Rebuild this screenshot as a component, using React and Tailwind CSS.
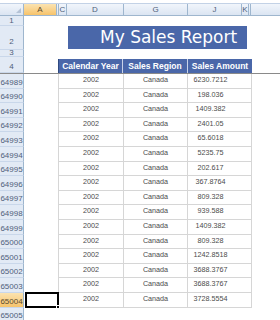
const amounts = [
  "6230.7212",
  "198.036",
  "1409.382",
  "2401.05",
  "65.6018",
  "5235.75",
  "202.617",
  "367.8764",
  "809.328",
  "939.588",
  "1409.382",
  "809.328",
  "1242.8518",
  "3688.3767",
  "3688.3767",
  "3728.5554",
];

const rows = amounts.map((amount, i) => ({
  n: 64989 + i,
  year: "2002",
  region: "Canada",
  amount,
}));

function ColHead({ label, w, active }) {
  return (
    <div
      className={`${w} flex items-center justify-center border-r border-[#9eb6ce] text-[8px] leading-none ${
        active
          ? "bg-linear-to-b from-[#fbe3b0] to-[#f6c36a] text-[#5a4a2a]"
          : "text-[#4f607a]"
      }`}
    >
      {label}
    </div>
  );
}

function RowLabel({ n, h, active, align = "items-end pb-[1px]" }) {
  return (
    <div
      className={`${h} ${align} w-[24px] shrink-0 flex justify-center border-r border-b border-r-[#9eb6ce] border-b-[#c9d7ea] text-[8px] leading-none ${
        active
          ? "bg-linear-to-b from-[#fbe3b0] to-[#f6c36a] text-[#5a4a2a]"
          : "bg-[#e2eaf5] text-[#4f607a]"
      }`}
    >
      {n}
    </div>
  );
}

export default function App() {
  return (
    <div className="w-[280px] h-[320px] overflow-hidden bg-white font-['Liberation_Sans',Arial,sans-serif]">
      <div className="h-[4px] bg-white border-b border-[#c3d2e6]" />

      {/* column headers */}
      <div className="flex h-[12px] bg-linear-to-b from-[#f1f5fb] to-[#dbe5f2] border-b border-[#9eb6ce]">
        <div className="w-[24px] relative border-r border-[#9eb6ce]">
          <div className="absolute right-[2px] bottom-[2px] w-0 h-0 border-l-[5px] border-t-[5px] border-l-transparent border-t-transparent border-r-0 border-b-[5px] border-b-[#b5c3d6]" />
        </div>
        <ColHead label="A" w="w-[33px]" active />
        <div className="w-[2px] border-r border-[#9eb6ce]" />
        <ColHead label="C" w="w-[8px]" />
        <ColHead label="D" w="w-[57px]" />
        <ColHead label="G" w="w-[64px]" />
        <ColHead label="J" w="w-[54px]" />
        <ColHead label="K" w="w-[7px]" />
        <div className="w-[2px] border-r border-[#9eb6ce]" />
        <div className="flex-1" />
      </div>

      {/* row 1 */}
      <div className="flex">
        <RowLabel n="1" h="h-[10px]" align="items-center" />
      </div>

      {/* row 2: title */}
      <div className="flex">
        <RowLabel n="2" h="h-[24px]" align="items-end pb-[3px]" />
        <div className="ml-[44px] w-[179px] h-[23px] bg-[#4a67a9] flex items-center pl-[32px] text-white text-[17px] leading-none font-['DejaVu_Sans',Verdana,sans-serif]">
          My Sales Report
        </div>
      </div>

      {/* row 3 */}
      <div className="flex">
        <RowLabel n="3" h="h-[7px]" align="items-center" />
      </div>

      {/* row 4: table header */}
      <div className="flex">
        <RowLabel n="4" h="h-[16px]" />
        <div className="ml-[35px] mt-[2px] h-[14px] flex bg-[#4a67a9] text-white font-bold text-[8.5px] leading-none shadow-[-1px_0_0_#2f4a80]">
          <div className="w-[64px] flex items-center justify-center border-r border-[#c9d3e8]">
            Calendar Year
          </div>
          <div className="w-[65px] flex items-center justify-center border-r border-[#c9d3e8]">
            Sales Region
          </div>
          <div className="w-[64px] flex items-center justify-center">
            Sales Amount
          </div>
        </div>
      </div>

      {/* freeze line */}
      <div className="h-[1px] bg-[#8a8a8a]" />

      {/* data */}
      {rows.map((r, i) => {
        const last = i === rows.length - 1;
        return (
          <div key={r.n} className="flex">
            <RowLabel n={r.n} h="h-[14.6px]" active={last} />
            <div className="w-[34px] relative">
              {last && (
                <div className="absolute left-[1px] -top-[1px] w-[34px] h-[16px] border-2 border-black z-10">
                  <div className="absolute -right-[3px] -bottom-[3px] w-[4px] h-[4px] bg-black border border-white" />
                </div>
              )}
            </div>
            <div className="flex text-[7.2px] leading-none text-[#4b4b4b] border-l border-[#d6d6d6]">
              <div className="w-[65px] h-[14.6px] pt-[2px] text-center border-r border-b border-[#d6d6d6]">
                {r.year}
              </div>
              <div className="w-[64px] h-[14.6px] pt-[2px] text-center border-r border-b border-[#d6d6d6]">
                {r.region}
              </div>
              <div className="w-[64px] h-[14.6px] pt-[2px] pr-[18px] text-center border-r border-b border-[#d6d6d6]">
                {r.amount}
              </div>
            </div>
          </div>
        );
      })}

      {/* row 65005 */}
      <div className="flex">
        <RowLabel n="65005" h="h-[14px]" />
      </div>
    </div>
  );
}
